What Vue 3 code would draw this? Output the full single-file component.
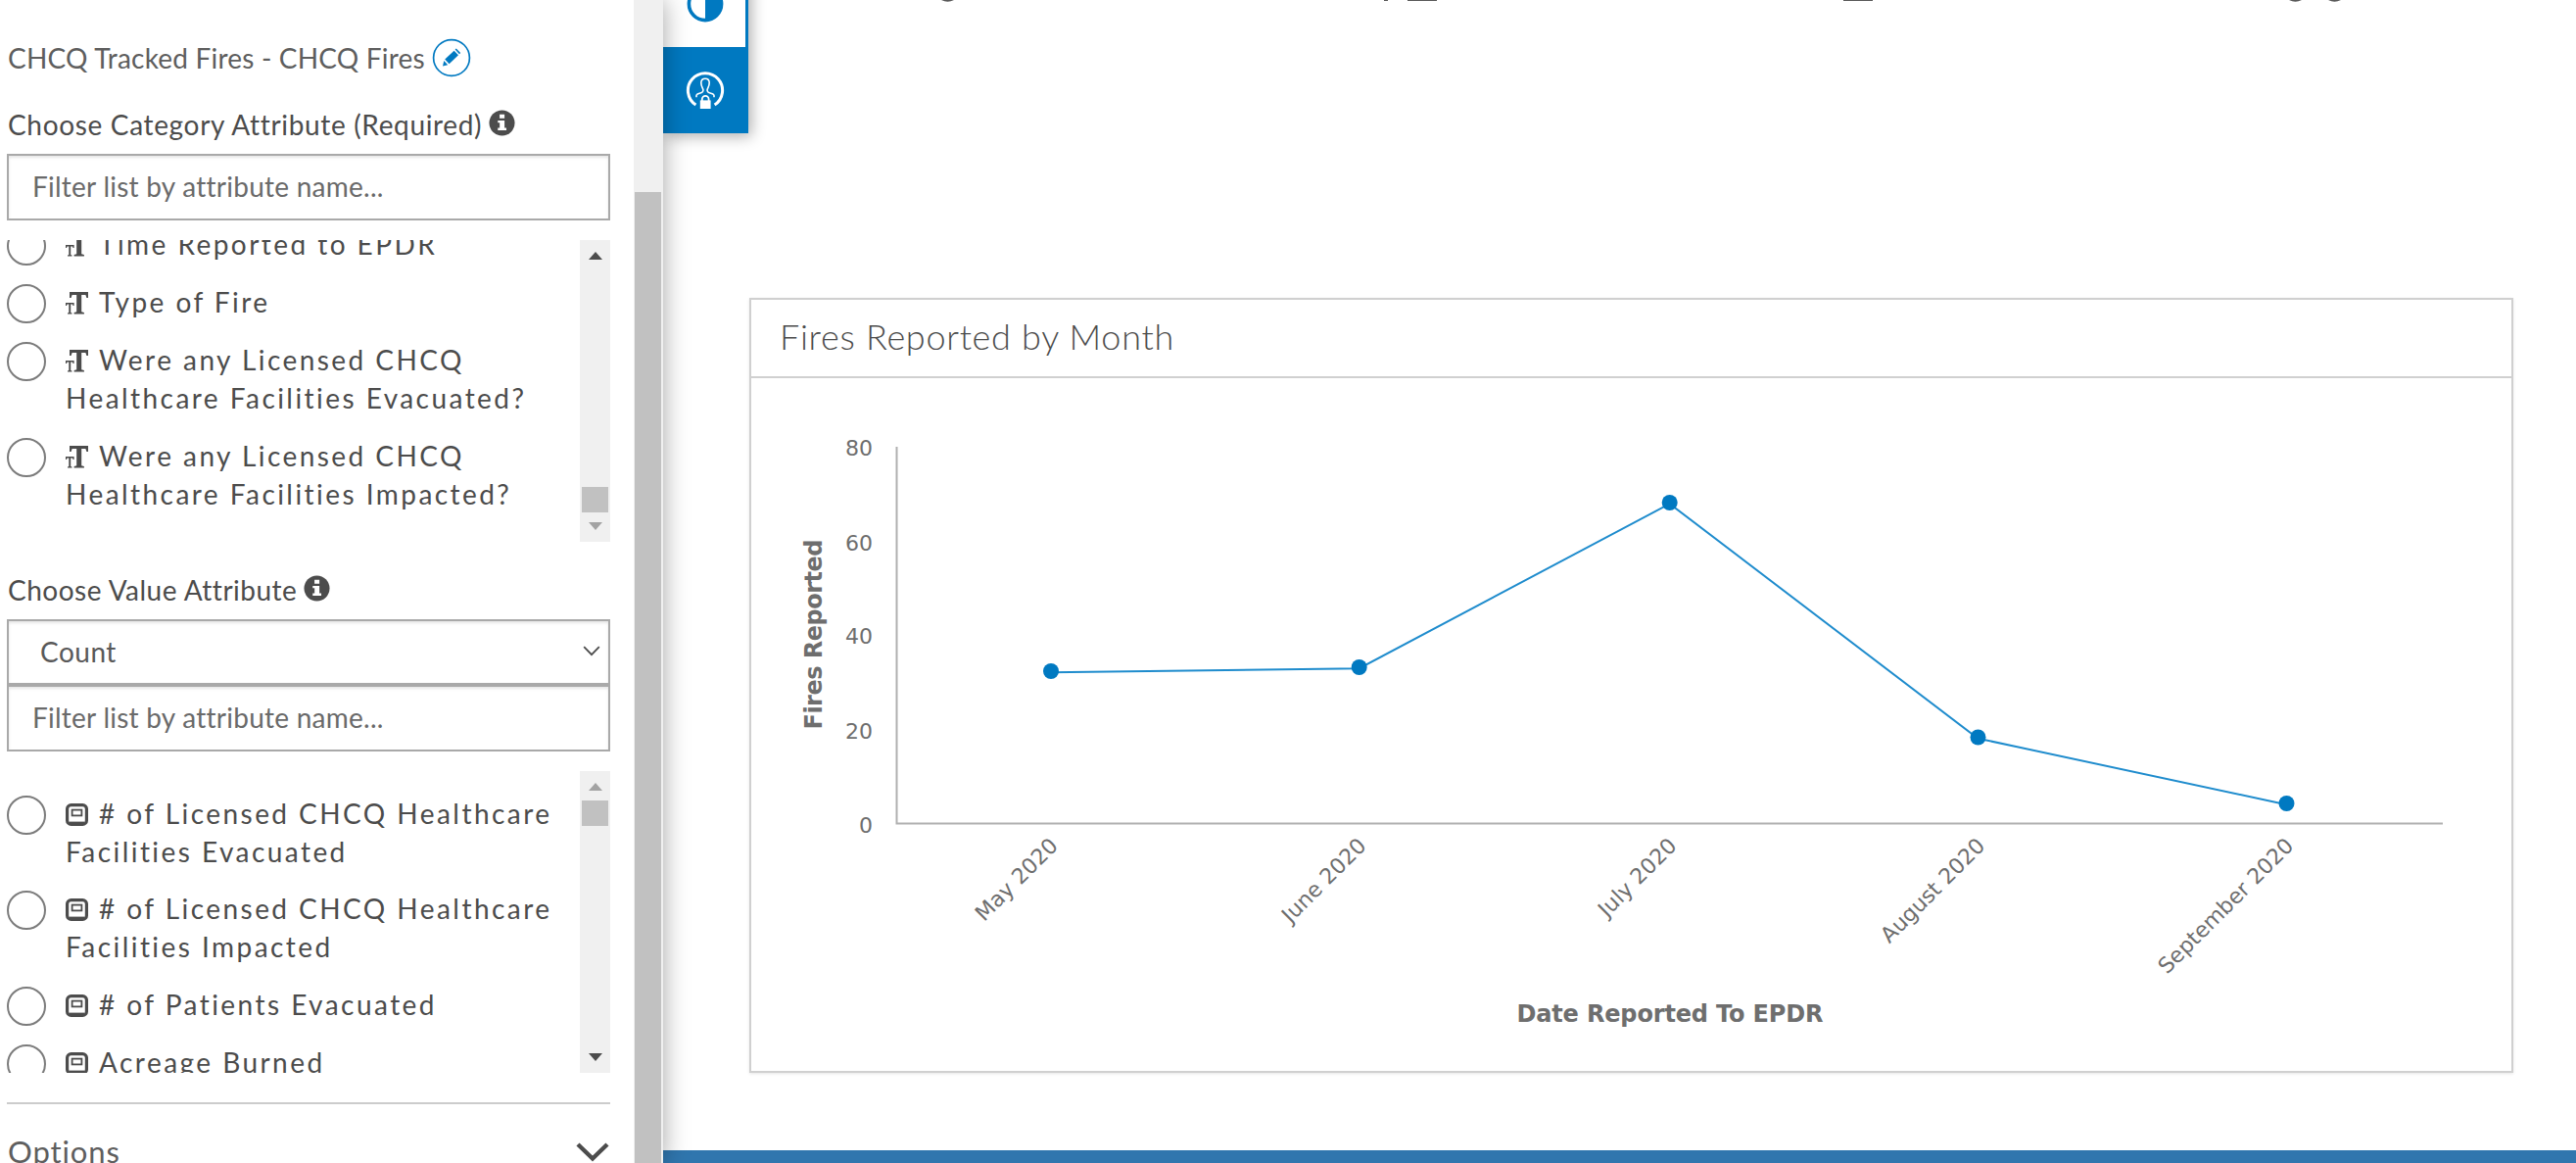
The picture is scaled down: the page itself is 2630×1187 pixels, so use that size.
<template>
  <div class="page">
    <!-- Settings panel -->
    <aside class="panel">
      <div class="panel-body">
        <div class="layer-row">
          <span class="layer-name">CHCQ Tracked Fires - CHCQ Fires</span>
          <button class="edit-btn" title="Edit">
            <svg width="40" height="40" viewBox="0 0 40 40">
              <circle cx="20" cy="20" r="18.4" fill="#fff" stroke="#0079c1" stroke-width="1.7" />
              <path d="M11 28.5 L12.3 23 L16.2 27.2 Z" fill="#0079c1" />
              <path d="M13.2 21.6 L22.6 12.7 L27 17.2 L17.6 26.2 Z" fill="#0079c1" />
              <path d="M23.6 11.6 L24.8 10.5 L29.2 15 L28 16.2 Z" fill="#0079c1" />
            </svg>
          </button>
        </div>

        <div class="field-label category">
          <span>Choose Category Attribute (Required)</span>
          <svg class="info" viewBox="0 0 28 28">
            <circle cx="14" cy="14" r="13.5" />
            <path d="M11.5 5h5.2v4.2h-5.2zM9.6 11.3h7.1v8h2v2.5H9.6v-2.5h2v-5.5h-2z" />
          </svg>
        </div>
        <input class="filter" type="text" placeholder="Filter list by attribute name...">

        <div class="attr-list scrolled">
          <div class="items">
            <label v-for="item in categoryItems" :key="item" class="item">
              <span class="radio"></span>
              <span class="item-text">
                <svg class="type-icon" viewBox="0 0 23 23">
                  <path d="M4 0h19v6h-1.6l-1-3h-4.2v17.2l2.7.8v1.5H8.6V21l2.6-.8V3H6.6l-1 3H4z" />
                  <path d="M0 11h8.6v3H7.5l-.4-1.5H5.2v8.6l1.3.5v.9H2v-.9l1.3-.5v-8.6H1.5L1.1 14H0z" />
                </svg>{{ item }}
              </span>
            </label>
          </div>
          <div class="scrollbar">
            <i class="arrow up"></i>
            <i class="thumb bottom"></i>
            <i class="arrow down muted"></i>
          </div>
        </div>

        <div class="field-label value">
          <span>Choose Value Attribute</span>
          <svg class="info" viewBox="0 0 28 28">
            <circle cx="14" cy="14" r="13.5" />
            <path d="M11.5 5h5.2v4.2h-5.2zM9.6 11.3h7.1v8h2v2.5H9.6v-2.5h2v-5.5h-2z" />
          </svg>
        </div>
        <div class="select">
          <span>Count</span>
          <svg width="18" height="11" viewBox="0 0 18 11">
            <path d="M1.2 1.2 L9 9.2 L16.8 1.2" fill="none" stroke="#4c4c4c" stroke-width="1.8" />
          </svg>
        </div>
        <input class="filter attached" type="text" placeholder="Filter list by attribute name...">

        <div class="attr-list numbers">
          <div class="items">
            <label v-for="item in valueItems" :key="item" class="item">
              <span class="radio"></span>
              <span class="item-text">
                <svg class="type-icon" viewBox="0 0 23 23">
                  <rect x="1.6" y="1.6" width="19.8" height="19.8" rx="4" fill="none" stroke="#4c4c4c" stroke-width="3.2" />
                  <rect x="6.6" y="6.6" width="9.8" height="5.8" fill="none" stroke="#4c4c4c" stroke-width="1.8" />
                  <path d="M4 19.4h15" stroke="#4c4c4c" stroke-width="1.6" />
                </svg>{{ item }}
              </span>
            </label>
          </div>
          <div class="scrollbar">
            <i class="arrow up muted"></i>
            <i class="thumb"></i>
            <i class="arrow down"></i>
          </div>
        </div>

        <div class="options">
          <span>Options</span>
          <svg width="34" height="20" viewBox="0 0 34 20">
            <path d="M2 2 L17 16.5 L32 2" fill="none" stroke="#4c4c4c" stroke-width="4.4" />
          </svg>
        </div>
      </div>
      <div class="panel-scroll"><i></i></div>
    </aside>

    <!-- Preview -->
    <main class="preview">
      <svg class="heading-edge" width="1953" height="3" viewBox="677 0 1953 3">
        <path d="M1437 0H1467V1H1437ZM1882 0H1912V1H1882ZM1413 0H1417V1H1413Z" />
        <path d="M961 0H974Q967.5 3.6 961 0ZM2337 0H2350Q2343.5 3.6 2337 0ZM2377 0H2390Q2383.5 3.6 2377 0Z" />
      </svg>

      <div class="tabs">
        <button class="tab active" title="Appearance">
          <svg width="40" height="40" viewBox="0 0 40 40">
            <circle cx="20" cy="20" r="16.6" fill="#fff" stroke="#0079c1" stroke-width="3.6" />
            <path d="M20 3 A17 17 0 0 1 20 37 Z" fill="#0079c1" />
          </svg>
        </button>
        <button class="tab" title="Privacy">
          <svg width="40" height="42" viewBox="0 0 40 42">
            <g fill="none" stroke="#fff">
              <path d="M10.4 36.1 A17.6 17.6 0 1 1 29.6 36.1" stroke-width="3" />
              <path d="M11 28.2 V26.6 C11 25 12.5 24.6 14.2 24.2 C16.8 23.6 18.3 22.6 17.9 20.5 C17.5 18.6 15.8 17.4 15.8 13.6 C15.8 10.8 17.4 9.2 20 9.2 C22.6 9.2 24.2 10.8 24.2 13.6 C24.2 17.4 22.5 18.6 22.1 20.5 C21.7 22.6 23.2 23.6 25.8 24.2 C27.5 24.6 29 25 29 26.6 V28.2" stroke-width="1.6" />
              <path d="M16.8 32 V30.3 A3.4 3.4 0 0 1 23.6 30.3 V32" stroke-width="1.8" />
            </g>
            <rect x="14.8" y="31.4" width="10.8" height="8.6" fill="#fff" />
          </svg>
        </button>
      </div>

      <section class="card">
        <h2 class="card-title">Fires Reported by Month</h2>
        <svg class="chart" width="1797" height="706" viewBox="767 386 1797 706">
          <path d="M915.5 456 V840.5 H2494" fill="none" stroke="#b0b0b0" stroke-width="2" />
          <g class="tick" text-anchor="end">
            <text v-for="tick in yTicks" :key="tick.label" x="891" :y="tick.y">{{ tick.label }}</text>
          </g>
          <polyline :points="linePoints" fill="none" stroke="#1f8ccd" stroke-width="2" />
          <g v-for="point in points" :key="point.label">
            <circle :cx="point.x" :cy="point.y" r="8" fill="#0079c1" />
            <text class="tick" text-anchor="end" :transform="`translate(${point.x + 8.5} 864.5) rotate(-45)`">{{ point.label }}</text>
          </g>
          <text class="axis-title" text-anchor="middle" textLength="194" transform="translate(839 647.5) rotate(-90)">Fires Reported</text>
          <text class="axis-title" text-anchor="middle" textLength="313" x="1705" y="1043">Date Reported To EPDR</text>
        </svg>
      </section>

      <footer class="bottom-bar"></footer>
    </main>
  </div>
</template>

<script setup>
import { computed } from 'vue'

const categoryItems = [
  'Time Reported to EPDR',
  'Type of Fire',
  'Were any Licensed CHCQ Healthcare Facilities Evacuated?',
  'Were any Licensed CHCQ Healthcare Facilities Impacted?'
]

const valueItems = [
  '# of Licensed CHCQ Healthcare Facilities Evacuated',
  '# of Licensed CHCQ Healthcare Facilities Impacted',
  '# of Patients Evacuated',
  'Acreage Burned'
]

const yTicks = [
  { label: '80', y: 465 },
  { label: '60', y: 562 },
  { label: '40', y: 657 },
  { label: '20', y: 754 },
  { label: '0', y: 850 }
]

const points = [
  { label: 'May 2020', x: 1073, y: 685 },
  { label: 'June 2020', x: 1387.7, y: 681 },
  { label: 'July 2020', x: 1704.7, y: 513 },
  { label: 'August 2020', x: 2019.5, y: 752.5 },
  { label: 'September 2020', x: 2334.5, y: 820 }
]

const linePoints = computed(() => points.map(p => `${p.x},${p.y + 1.2}`).join(' '))
</script>

<style>
body {
  margin: 0;
  background: #fff;
  overflow: hidden;
}
</style>

<style scoped>
.page {
  display: flex;
  width: 2630px;
  height: 1187px;
  overflow: hidden;
  font-family: Lato, "Liberation Sans", sans-serif;
  font-size: 28px;
  color: #4c4c4c;
}

button {
  padding: 0;
  border: none;
  background: none;
}

svg {
  display: block;
  flex: none;
}

.panel {
  position: relative;
  z-index: 2;
  display: flex;
  flex: none;
  width: 677px;
  background: #fff;
  box-shadow: 0 0 24px rgba(0, 0, 0, 0.36);
}

.panel-body {
  box-sizing: border-box;
  width: 647px;
  height: 1187px;
  padding: 39px 24px 0 7px;
  overflow: hidden;
}

.layer-row {
  display: flex;
  align-items: center;
  height: 40px;
  padding-left: 1px;
}

.layer-name {
  width: 433px;
  color: #5e5e5e;
  white-space: nowrap;
  letter-spacing: 0.2px;
}

.field-label {
  display: flex;
  align-items: center;
  height: 36px;
  padding-left: 1px;
  white-space: nowrap;
}

.field-label.category {
  margin-top: 30px;
  letter-spacing: 0.66px;
}

.field-label.value {
  margin-top: 31px;
  letter-spacing: 0.5px;
}

.info {
  width: 27px;
  height: 27px;
  margin: -4px 0 0 7px;
}

.info circle {
  fill: #4c4c4c;
}

.info path {
  fill: #fff;
}

.filter,
.select {
  box-sizing: border-box;
  width: 616px;
  height: 68px;
  border: 2px solid #a9a9a9;
  border-radius: 0;
  background: #fff;
  box-shadow: inset 0 2px 3px rgba(0, 0, 0, 0.1);
  color: #595959;
  font: inherit;
}

.filter {
  display: block;
  margin-top: 12px;
  padding: 0 24px 2px;
  letter-spacing: 0.25px;
}

.filter::placeholder {
  color: #6a6a6a;
  opacity: 1;
}

.filter.attached {
  height: 68px;
  margin-top: -1px;
}

.select {
  display: flex;
  align-items: center;
  justify-content: space-between;
  margin-top: 12px;
  padding: 0 8px 2px 32px;
  border-bottom-width: 3px;
  letter-spacing: 0.5px;
}

.attr-list {
  display: flex;
  justify-content: space-between;
  height: 308px;
  margin-top: 20px;
  overflow: hidden;
}

.items {
  display: flex;
  flex-direction: column;
  gap: 19.3px;
  width: 575px;
}

.scrolled .items {
  justify-content: flex-end;
  padding-bottom: 28.5px;
}

.numbers .items {
  padding-top: 25px;
}

.item {
  display: flex;
  flex: none;
  gap: 20px;
  line-height: 39px;
  letter-spacing: 2.45px;
}

.radio {
  box-sizing: border-box;
  flex: none;
  width: 40px;
  height: 40px;
  border: 2px solid #7c7c7c;
  border-radius: 50%;
}

.item-text {
  margin-top: -1px;
  margin-bottom: 1px;
}

.type-icon {
  display: inline-block;
  width: 23px;
  height: 23px;
  margin-right: 11px;
  vertical-align: -2px;
  fill: #4c4c4c;
}

.scrollbar {
  display: flex;
  flex-direction: column;
  align-items: center;
  box-sizing: border-box;
  width: 31px;
  padding: 12px 0 12px;
  background: #f0f0f0;
}

.arrow {
  border: 7.5px solid transparent;
}

.arrow.up {
  border-top-width: 0;
  border-bottom: 8px solid #4c4c4c;
}

.arrow.down {
  margin-top: auto;
  border-bottom-width: 0;
  border-top: 8px solid #4c4c4c;
}

.arrow.up.muted {
  border-bottom-color: #a3a3a3;
}

.arrow.down.muted {
  margin-top: 10px;
  border-top-color: #a3a3a3;
}

.thumb {
  width: 27px;
  height: 26px;
  margin-top: 10px;
  background: #c1c1c1;
}

.thumb.bottom {
  margin-top: auto;
}

.options {
  display: flex;
  align-items: flex-start;
  justify-content: space-between;
  margin-top: 30px;
  padding: 29px 1px 0 1px;
  border-top: 2px solid #ccc;
  color: #5e5e5e;
  font-size: 31px;
  letter-spacing: 0.9px;
}

.options svg {
  margin-top: 10px;
}

.panel-scroll {
  display: flex;
  box-sizing: border-box;
  width: 30px;
  padding: 196px 0 0 1px;
  background: #f0f0f0;
}

.panel-scroll i {
  width: 27px;
  background: #c1c1c1;
}

.preview {
  position: relative;
  display: flex;
  flex: 1;
  flex-direction: column;
}

.heading-edge {
  margin-bottom: 301px;
  fill: #595959;
}

/* tabs hang from the top edge over the preview */
.tabs {
  position: absolute;
  top: -40px;
  left: 0;
  width: 87px;
  background: #0079c1;
  box-shadow: 3px 3px 14px rgba(0, 0, 0, 0.32);
}

.tab {
  display: flex;
  align-items: center;
  justify-content: center;
  width: 86px;
  height: 88px;
}

.tab.active {
  width: 83.5px;
  padding-left: 3px;
  box-sizing: border-box;
  background: #fff;
}

.card {
  box-sizing: border-box;
  width: 1801px;
  height: 791px;
  margin-left: 88px;
  border: 2px solid #d0d0d0;
  box-shadow: 0 1px 3px rgba(0, 0, 0, 0.1);
}

.card-title {
  box-sizing: border-box;
  height: 80px;
  margin: 0;
  padding-left: 29px;
  border-bottom: 2px solid #d0d0d0;
  font-size: 36px;
  font-weight: 300;
  line-height: 75px;
  letter-spacing: 0.7px;
}

.tick {
  fill: #6e6e6e;
  font: 22px "DejaVu Sans", sans-serif;
}

.axis-title {
  fill: #6e6e6e;
  font: bold 24px "DejaVu Sans", sans-serif;
}

.bottom-bar {
  height: 13px;
  margin-top: auto;
  background: #3076ae;
}
</style>
